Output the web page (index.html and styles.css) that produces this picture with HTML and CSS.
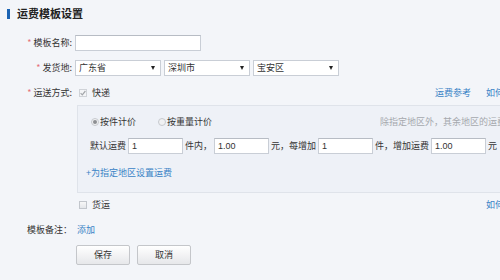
FILE: index.html
```html
<!DOCTYPE html>
<html lang="zh-CN">
<head>
<meta charset="utf-8">
<title>运费模板设置</title>
<link rel="stylesheet" href="styles.css">
</head>
<body>
<div class="page">
  <h1 class="title"><span class="bar"></span>运费模板设置</h1>
  <div class="form">
    <div class="row r-name">
      <div class="lbl"><em>*</em> 模板名称:</div>
      <div class="ctl"><span class="txt w-name"></span></div>
    </div>
    <div class="row r-from">
      <div class="lbl"><em>*</em> 发货地:</div>
      <div class="ctl sels">
        <span class="sel"><span>广东省</span><i class="arr"></i></span>
        <span class="sel"><span>深圳市</span><i class="arr"></i></span>
        <span class="sel"><span>宝安区</span><i class="arr"></i></span>
      </div>
    </div>
    <div class="row r-way">
      <div class="lbl"><em>*</em> 运送方式:</div>
      <div class="ctl">
        <span class="chk on"><svg viewBox="0 0 8 8" width="8" height="8"><path d="M1.6 4.1 L3.3 5.8 L6.4 2" fill="none" stroke="#a3a6aa" stroke-width="1.2"/></svg></span>
        <span class="opt">快递</span>
        <span class="links"><a class="lnk">运费参考</a><a class="lnk">如何设置运费</a></span>
      </div>
    </div>
    <div class="row r-box">
      <div class="lbl"></div>
      <div class="ctl">
        <div class="box">
          <div class="b-radios">
            <span class="rad on"></span><span class="rtxt">按件计价</span>
            <span class="rad"></span><span class="rtxt">按重量计价</span>
            <span class="hint">除指定地区外，其余地区的运费采用“默认运费”</span>
          </div>
          <div class="b-fee">
            <span>默认运费</span><span class="txt w-fee">1</span>
            <span>件内，</span><span class="txt w-fee">1.00</span>
            <span>元，每增加</span><span class="txt w-fee">1</span>
            <span>件，增加运费</span><span class="txt w-fee">1.00</span>
            <span>元</span>
          </div>
          <div class="b-add"><a class="lnk">+为指定地区设置运费</a></div>
        </div>
      </div>
    </div>
    <div class="row r-freight">
      <div class="lbl"></div>
      <div class="ctl">
        <span class="chk"></span>
        <span class="opt">货运</span>
        <span class="links"><a class="lnk">如何设置运费</a></span>
      </div>
    </div>
    <div class="row r-note">
      <div class="lbl">模板备注：</div>
      <div class="ctl"><a class="lnk">添加</a></div>
    </div>
    <div class="row r-btns">
      <div class="lbl"></div>
      <div class="ctl">
        <span class="btn">保存</span>
        <span class="btn">取消</span>
      </div>
    </div>
  </div>
</div>
</body>
</html>
```

FILE: styles.css
```css
html, body {
  margin: 0;
  padding: 0;
  overflow: hidden;
  background: #f3f5f9;
}
body {
  font-family: "Noto Sans CJK SC", "Liberation Sans", sans-serif;
  font-size: 9px;
  color: #333;
  width: 500px;
  height: 280px;
}
.page {
  width: 550px;
}
.title {
  margin: 0;
  height: 27px;
  display: flex;
  align-items: center;
  padding-left: 7px;
  font-size: 11px;
  font-weight: bold;
  color: #222;
  line-height: 1;
}
.bar {
  width: 3px;
  height: 10px;
  background: #1b63b3;
  margin-right: 7px;
}
.form {
  display: flex;
  flex-direction: column;
  padding-right: 10px;
}
.row {
  display: flex;
  align-items: center;
  line-height: 12px;
}
.lbl {
  width: 72px;
  flex-shrink: 0;
  text-align: right;
  white-space: nowrap;
  color: #333;
}
.lbl em {
  font-style: normal;
  color: #e5707a;
}
.ctl {
  flex: 1;
  display: flex;
  align-items: center;
  margin-left: 3px;
  white-space: nowrap;
}
.r-name { margin-top: 8px; height: 16px; }
.r-from { margin-top: 9px; height: 16px; }
.r-way { margin-top: 10px; height: 14px; }
.r-box { margin-top: 5px; }
.r-freight { margin-top: 6px; height: 12px; }
.r-note { margin-top: 13px; height: 12px; }
.r-btns { margin-top: 9px; height: 20px; }

.txt {
  box-sizing: border-box;
  height: 16px;
  background: #fff;
  border: 1px solid #c9ced6;
  border-top-color: #b7bcc4;
  display: inline-flex;
  align-items: center;
  padding-left: 3px;
  color: #333;
  font-family: "Liberation Sans", sans-serif;
  font-size: 9px;
}
.w-name { width: 126px; }
.w-fee { width: 55px; margin: 0 2px; }

.sels { gap: 3px; }
.sel {
  box-sizing: border-box;
  width: 86px;
  height: 16px;
  background: #fff;
  border: 1px solid #c9ced6;
  display: flex;
  align-items: center;
  justify-content: space-between;
  padding: 0 5px 0 3px;
}
.arr {
  width: 0;
  height: 0;
  border-left: 2.5px solid transparent;
  border-right: 2.5px solid transparent;
  border-top: 4px solid #222;
}

.chk {
  box-sizing: border-box;
  width: 8px;
  height: 8px;
  border: 1px solid #c2c6cc;
  background: linear-gradient(#f7f7f7, #e4e6ea);
  margin-left: 4px;
  display: inline-flex;
  align-items: center;
  justify-content: center;
  overflow: hidden;
}
.chk.on {
  border-color: #d0d3d8;
  background: #f4f5f7;
}
.chk.on svg {
  flex-shrink: 0;
}
.opt { margin-left: 5px; }
.links {
  margin-left: auto;
  display: flex;
  gap: 15px;
}
.lnk {
  color: #3a83c6;
  text-decoration: none;
}

.box {
  box-sizing: border-box;
  width: 463px;
  margin-left: 2px;
  background: #eef1f7;
  border: 1px solid #dfe3ea;
  padding: 10px 0 13px 8px;
}
.b-radios {
  display: flex;
  align-items: center;
  height: 12px;
  padding-left: 5px;
}
.rad {
  box-sizing: border-box;
  width: 8px;
  height: 8px;
  border-radius: 50%;
  border: 1px solid #c6c9ce;
  background: #f0f1f3;
  display: inline-flex;
  align-items: center;
  justify-content: center;
  flex-shrink: 0;
}
.rad.on::after {
  content: "";
  width: 4px;
  height: 4px;
  border-radius: 50%;
  background: #8d8f93;
}
.rtxt { margin-left: 1px; margin-right: 22px; }
.hint {
  margin-left: 146px;
  color: #a5a8ad;
  white-space: nowrap;
  flex-shrink: 0;
}
.b-fee {
  display: flex;
  align-items: center;
  margin-top: 10px;
  height: 16px;
  padding-left: 4px;
  white-space: nowrap;
}
.b-add {
  margin-top: 13px;
  height: 12px;
  display: flex;
  align-items: center;
}
.r-note .ctl { margin-left: 5px; }
.r-btns .ctl { margin-left: 4px; gap: 7px; }
.btn {
  box-sizing: border-box;
  width: 54px;
  height: 20px;
  border: 1px solid #c4c6ca;
  border-radius: 2px;
  background: linear-gradient(#ffffff, #e6e7ea);
  display: inline-flex;
  align-items: center;
  justify-content: center;
  color: #333;
}
```
